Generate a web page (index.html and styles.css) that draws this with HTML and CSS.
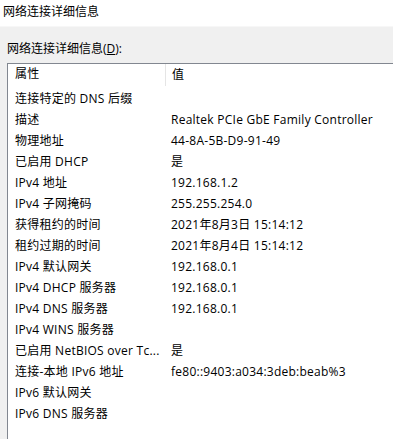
FILE: index.html
```html
<!DOCTYPE html>
<html>
<head>
  <meta charset="UTF-8">
  <title>网络连接详细信息</title>
  <link rel="stylesheet" href="styles.css">
</head>
<body>
  <div class="titlebar">网络连接详细信息</div>

  <div class="panel">
    <p class="label">网络连接详细信息(<u>D</u>):</p>

    <div class="listbox">
      <div class="head">
        <div class="col1">属性</div>
        <div class="col2">值</div>
      </div>
      <div class="row"><div class="col1">连接特定的 DNS 后缀</div><div class="col2"></div></div>
      <div class="row"><div class="col1">描述</div><div class="col2">Realtek PCIe GbE Family Controller</div></div>
      <div class="row"><div class="col1">物理地址</div><div class="col2">44-8A-5B-D9-91-49</div></div>
      <div class="row"><div class="col1">已启用 DHCP</div><div class="col2">是</div></div>
      <div class="row"><div class="col1">IPv4 地址</div><div class="col2">192.168.1.2</div></div>
      <div class="row"><div class="col1">IPv4 子网掩码</div><div class="col2">255.255.254.0</div></div>
      <div class="row"><div class="col1">获得租约的时间</div><div class="col2">2021年8月3日 15:14:12</div></div>
      <div class="row"><div class="col1">租约过期的时间</div><div class="col2">2021年8月4日 15:14:12</div></div>
      <div class="row"><div class="col1">IPv4 默认网关</div><div class="col2">192.168.0.1</div></div>
      <div class="row"><div class="col1">IPv4 DHCP 服务器</div><div class="col2">192.168.0.1</div></div>
      <div class="row"><div class="col1">IPv4 DNS 服务器</div><div class="col2">192.168.0.1</div></div>
      <div class="row"><div class="col1">IPv4 WINS 服务器</div><div class="col2"></div></div>
      <div class="row"><div class="col1">已启用 NetBIOS over Tc...</div><div class="col2">是</div></div>
      <div class="row"><div class="col1">连接-本地 IPv6 地址</div><div class="col2">fe80::9403:a034:3deb:beab%3</div></div>
      <div class="row"><div class="col1">IPv6 默认网关</div><div class="col2"></div></div>
      <div class="row"><div class="col1">IPv6 DNS 服务器</div><div class="col2"></div></div>
    </div>
  </div>
</body>
</html>
```

FILE: styles.css
```css
html, body {
  margin: 0;
  height: 100%;
  overflow: hidden;
}
body {
  font-family: "Open Sans", "Noto Sans CJK SC", sans-serif;
  font-size: 12px;
  color: #000;
  background: #f0f0f0;
  display: flex;
  flex-direction: column;
}
.titlebar {
  background: #fff;
  height: 26px;
  line-height: 24px;
  padding-left: 3px;
}
.panel {
  flex: 1;
  display: flex;
  flex-direction: column;
  border-top: 1px solid #f7f7f7;
  padding: 13px 0 0 7px;
  min-height: 0;
}
.label {
  margin: 0 0 6px 0;
  line-height: 17px;
}
.listbox {
  flex: 1;
  background: #fff;
  border: 1px solid #828790;
  border-right: none;
  border-bottom: none;
  overflow: hidden;
  letter-spacing: 0.25px;
}
.head, .row {
  display: flex;
  white-space: nowrap;
}
.head {
  height: 24px;
  line-height: 22px;
}
.head .col1 {
  border-right: 1px solid #e5e5e5;
  height: 22px;
  line-height: 20px;
}
.row {
  height: 21px;
  line-height: 21px;
}
.col1 {
  width: 150px;
  padding-left: 7px;
  overflow: hidden;
}
.col2 {
  padding-left: 6px;
}
```
